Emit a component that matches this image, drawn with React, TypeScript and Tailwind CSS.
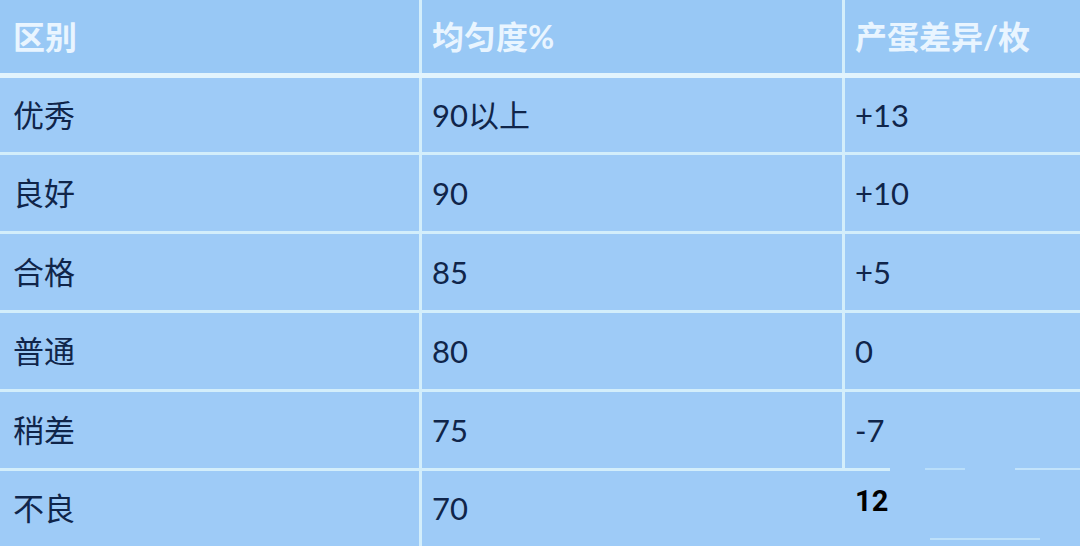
import React from 'react';

const rows = [
  { name: '优秀', rate: '90以上', diff: '+13', h: 'h-[74px]' },
  { name: '良好', rate: '90', diff: '+10', h: 'h-[76px]' },
  { name: '合格', rate: '85', diff: '+5', h: 'h-[76px]' },
  { name: '普通', rate: '80', diff: '0', h: 'h-[76px]' },
  { name: '稍差', rate: '75', diff: '-7', h: 'h-[76px]' },
];

const font = { fontFamily: 'Lato, "Noto Sans CJK SC", sans-serif' };

export default function App() {
  return (
    <div className="w-[1080px] h-[546px] overflow-hidden bg-[#d3eefb] flex flex-col" style={font}>
      {/* header */}
      <div className="h-[73px] shrink-0 flex bg-[#98c8f5] text-[#e9f5ff] text-[32px] font-bold">
        <div className="w-[419px] pl-[13px] flex items-center">区别</div>
        <div className="w-[423px] pl-[10px] border-l-[3px] border-[#d3eefb] flex items-center">均匀度%</div>
        <div className="flex-1 pl-[10px] border-l-[3px] border-[#d3eefb] flex items-center">产蛋差异/枚</div>
      </div>
      <div className="h-[5px] shrink-0 bg-[#e2f4fd]" />

      {rows.map((r) => (
        <React.Fragment key={r.name}>
          <div className={`${r.h} shrink-0 flex bg-[#9ecbf7] text-[#10254a] text-[31px]`}>
            <div className="w-[419px] pl-[13px] flex items-center">{r.name}</div>
            <div className="w-[423px] pl-[10px] border-l-[3px] border-[#d3eefb] flex items-center">{r.rate}</div>
            <div className="flex-1 pl-[10px] border-l-[3px] border-[#d3eefb] flex items-center">{r.diff}</div>
          </div>
          <div className="h-[3px] shrink-0" />
        </React.Fragment>
      ))}

      {/* last row, third cell pasted over */}
      <div className="relative flex-1 flex bg-[#9ecbf7] text-[#10254a] text-[31px]">
        <div className="absolute left-[890px] right-0 -top-[3px] h-[3px] bg-[#9ecbf7]" />
        <div className="absolute left-[925px] w-[40px] -top-[3px] h-[2px] bg-[#b9defa]" />
        <div className="absolute left-[1015px] right-0 -top-[3px] h-[2px] bg-[#c2e3fb]" />
        <div className="absolute left-[930px] w-[110px] bottom-[6px] h-[2px] bg-[#bde0fa]" />
        <div className="w-[419px] pl-[13px] flex items-center">不良</div>
        <div className="w-[426px] pl-[10px] border-l-[3px] border-[#d3eefb] flex items-center">70</div>
        <div className="flex-1 pl-[10px] pb-[14px] flex items-center">
          <span className="text-black text-[29px] font-bold" style={{ fontFamily: 'Roboto, sans-serif' }}>12</span>
        </div>
      </div>
    </div>
  );
}
